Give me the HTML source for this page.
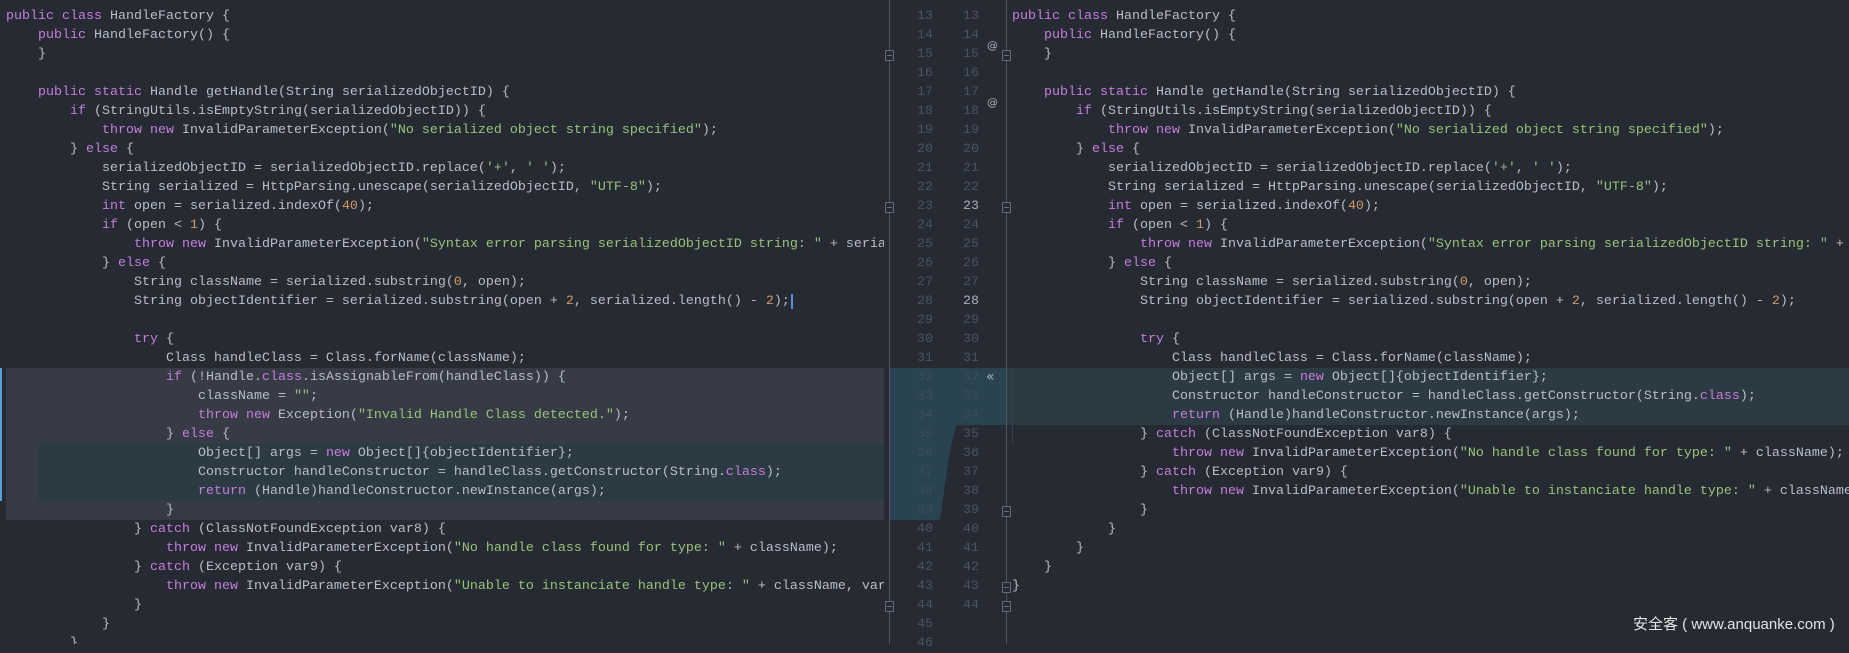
<!DOCTYPE html>
<html><head><meta charset="utf-8">
<style>
html,body{margin:0;padding:0;}
body{width:1849px;height:644px;background:#262a33;position:relative;overflow:hidden;font-family:"Liberation Mono",monospace;}
pre{margin:0;position:absolute;font-family:"Liberation Mono",monospace;font-size:13.33px;line-height:19px;color:#b8bec8;white-space:pre;}
.k{color:#c77ddc}.s{color:#98c379}.n{color:#d19a66}
.abs{position:absolute}
.num{position:absolute;font-size:13.33px;line-height:19px;color:#4b5260;text-align:right;width:40px;}
.num div{height:19px}
.d{color:#3b4d5c}
.b{color:#aab0bb}
.fold{position:absolute;width:9px;height:11px;border:1px solid #666c78;border-radius:1px;background:#262a33;box-sizing:border-box}
.fold:after{content:"";position:absolute;left:1px;right:1px;top:4px;height:1px;background:#666c78}
</style></head><body>
<div class="abs" style="left:6px;top:368px;width:878px;height:152px;background:#363b45"></div>
<div class="abs" style="left:38px;top:444px;width:846px;height:57px;background:#2c3a43"></div>
<div class="abs" style="left:0;top:368px;width:2px;height:133px;background:#5a9fd8"></div>
<div class="abs" style="left:1007px;top:368px;width:842px;height:57px;background:#2c3a43"></div>
<div class="abs" style="left:1012px;top:368px;width:1px;height:76px;background:#3a404a"></div>
<svg class="abs" style="left:0;top:0" width="1849" height="644">
<path d="M889 368 L1007 368 L1007 425 L957 425 C950 440 946 480 940 520 L889 520 Z" fill="#2a4350"/>
<line x1="889.5" y1="0" x2="889.5" y2="644" stroke="#50565f" stroke-width="1"/>
<line x1="1006.5" y1="0" x2="1006.5" y2="644" stroke="#50565f" stroke-width="1"/>
</svg>
<div class="fold" style="left:885px;top:50px"></div>
<div class="fold" style="left:885px;top:202px"></div>
<div class="fold" style="left:885px;top:601px"></div>
<div class="fold" style="left:1002px;top:50px"></div>
<div class="fold" style="left:1002px;top:202px"></div>
<div class="fold" style="left:1002px;top:506px"></div>
<div class="fold" style="left:1002px;top:582px"></div>
<div class="fold" style="left:1002px;top:601px"></div>
<div class="abs" style="left:987px;top:36px;color:#aab0bb;font-size:11px;line-height:19px;font-family:'DejaVu Sans',sans-serif">@</div>
<div class="abs" style="left:987px;top:93px;color:#aab0bb;font-size:11px;line-height:19px;font-family:'DejaVu Sans',sans-serif">@</div>
<div class="abs" style="left:986px;top:368px;color:#aab0bb;font-size:14px;line-height:19px;font-family:'DejaVu Sans',sans-serif">«</div>
<div class="num" style="left:893px;top:-12px"><div>12</div><div>13</div><div>14</div><div>15</div><div>16</div><div>17</div><div>18</div><div>19</div><div>20</div><div>21</div><div>22</div><div>23</div><div>24</div><div>25</div><div>26</div><div>27</div><div>28</div><div>29</div><div>30</div><div>31</div><div class="d">32</div><div class="d">33</div><div class="d">34</div><div class="d">35</div><div class="d">36</div><div class="d">37</div><div class="d">38</div><div class="d">39</div><div>40</div><div>41</div><div>42</div><div>43</div><div>44</div><div>45</div><div>46</div></div>
<div class="num" style="left:939px;top:-12px"><div>12</div><div>13</div><div>14</div><div>15</div><div>16</div><div>17</div><div>18</div><div>19</div><div>20</div><div>21</div><div>22</div><div class="b">23</div><div>24</div><div>25</div><div>26</div><div>27</div><div class="b">28</div><div>29</div><div>30</div><div>31</div><div class="d">32</div><div class="d">33</div><div class="d">34</div><div>35</div><div>36</div><div>37</div><div>38</div><div>39</div><div>40</div><div>41</div><div>42</div><div>43</div><div>44</div></div>
<div class="abs" style="left:0;top:0;width:884px;height:644px;overflow:hidden">
<pre style="left:6px;top:7px"><span class="k">public class</span> HandleFactory {
    <span class="k">public</span> HandleFactory() {
    }

    <span class="k">public static</span> Handle getHandle(String serializedObjectID) {
        <span class="k">if</span> (StringUtils.isEmptyString(serializedObjectID)) {
            <span class="k">throw new</span> InvalidParameterException(<span class="s">"No serialized object string specified"</span>);
        } <span class="k">else</span> {
            serializedObjectID = serializedObjectID.replace(<span class="s">'+'</span>, <span class="s">' '</span>);
            String serialized = HttpParsing.unescape(serializedObjectID, <span class="s">"UTF-8"</span>);
            <span class="k">int</span> open = serialized.indexOf(<span class="n">40</span>);
            <span class="k">if</span> (open &lt; <span class="n">1</span>) {
                <span class="k">throw new</span> InvalidParameterException(<span class="s">"Syntax error parsing serializedObjectID string: "</span> + serializedObjectID);
            } <span class="k">else</span> {
                String className = serialized.substring(<span class="n">0</span>, open);
                String objectIdentifier = serialized.substring(open + <span class="n">2</span>, serialized.length() - <span class="n">2</span>);<span style="border-left:2px solid #5a8fe0;margin-left:1px"></span>

                <span class="k">try</span> {
                    Class handleClass = Class.forName(className);
                    <span class="k">if</span> (!Handle.<span class="k">class</span>.isAssignableFrom(handleClass)) {
                        className = <span class="s">""</span>;
                        <span class="k">throw new</span> Exception(<span class="s">"Invalid Handle Class detected."</span>);
                    } <span class="k">else</span> {
                        Object[] args = <span class="k">new</span> Object[]{objectIdentifier};
                        Constructor handleConstructor = handleClass.getConstructor(String.<span class="k">class</span>);
                        <span class="k">return</span> (Handle)handleConstructor.newInstance(args);
                    }
                } <span class="k">catch</span> (ClassNotFoundException var8) {
                    <span class="k">throw new</span> InvalidParameterException(<span class="s">"No handle class found for type: "</span> + className);
                } <span class="k">catch</span> (Exception var9) {
                    <span class="k">throw new</span> InvalidParameterException(<span class="s">"Unable to instanciate handle type: "</span> + className, var9);
                }
            }
        }
    }</pre></div>
<div class="abs" style="left:1007px;top:0;width:842px;height:644px;overflow:hidden">
<pre style="left:5px;top:7px"><span class="k">public class</span> HandleFactory {
    <span class="k">public</span> HandleFactory() {
    }

    <span class="k">public static</span> Handle getHandle(String serializedObjectID) {
        <span class="k">if</span> (StringUtils.isEmptyString(serializedObjectID)) {
            <span class="k">throw new</span> InvalidParameterException(<span class="s">"No serialized object string specified"</span>);
        } <span class="k">else</span> {
            serializedObjectID = serializedObjectID.replace(<span class="s">'+'</span>, <span class="s">' '</span>);
            String serialized = HttpParsing.unescape(serializedObjectID, <span class="s">"UTF-8"</span>);
            <span class="k">int</span> open = serialized.indexOf(<span class="n">40</span>);
            <span class="k">if</span> (open &lt; <span class="n">1</span>) {
                <span class="k">throw new</span> InvalidParameterException(<span class="s">"Syntax error parsing serializedObjectID string: "</span> + serializedObjectID);
            } <span class="k">else</span> {
                String className = serialized.substring(<span class="n">0</span>, open);
                String objectIdentifier = serialized.substring(open + <span class="n">2</span>, serialized.length() - <span class="n">2</span>);

                <span class="k">try</span> {
                    Class handleClass = Class.forName(className);
                    Object[] args = <span class="k">new</span> Object[]{objectIdentifier};
                    Constructor handleConstructor = handleClass.getConstructor(String.<span class="k">class</span>);
                    <span class="k">return</span> (Handle)handleConstructor.newInstance(args);
                } <span class="k">catch</span> (ClassNotFoundException var8) {
                    <span class="k">throw new</span> InvalidParameterException(<span class="s">"No handle class found for type: "</span> + className);
                } <span class="k">catch</span> (Exception var9) {
                    <span class="k">throw new</span> InvalidParameterException(<span class="s">"Unable to instanciate handle type: "</span> + className, var9);
                }
            }
        }
    }
}</pre></div>
<div class="abs" style="left:1633px;top:614px;color:#e4e4e4;font-size:15px;line-height:22px;font-family:'Liberation Sans','Noto Sans CJK SC',sans-serif;white-space:nowrap">安全客 ( www.anquanke.com )</div>
</body></html>
